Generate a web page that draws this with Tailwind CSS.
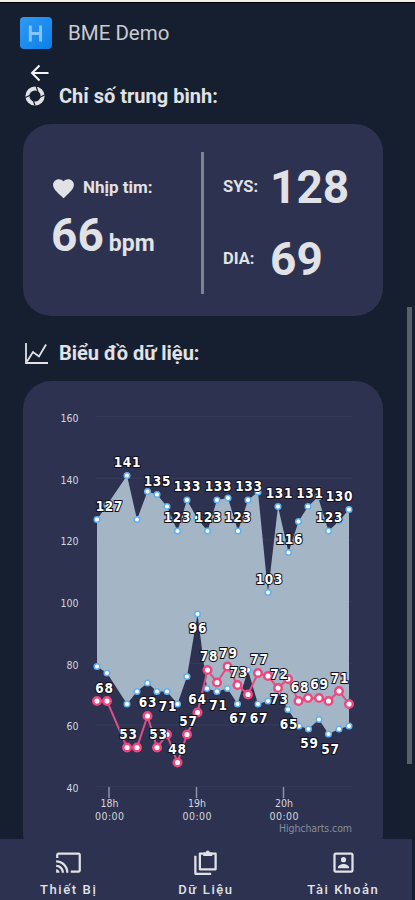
<!DOCTYPE html>
<html lang="vi">
<head>
    <meta charset="UTF-8">
    <meta name="viewport" content="width=device-width, initial-scale=1.0">
    <title>BME Demo</title>
    <script src="https://cdn.jsdelivr.net/npm/@tailwindcss/browser@4"></script>
</head>
<body class="bg-[#161f30] text-[#e1e2e6] font-['Roboto',sans-serif]">
    <div class="relative flex flex-col h-[900px] overflow-hidden border-t-2 border-[#f0f0f0]">
        <main class="h-[837px] overflow-hidden border-t border-black">
            <header class="flex items-center gap-4 pl-5 pt-[13px] h-[46px]">
                <div class="flex items-center justify-center w-8 h-8 rounded bg-linear-to-br from-[#2e9af5] to-[#087fe8]">
                    <svg width="32" height="32" viewBox="0 0 32 32" fill="none" stroke="#83c6fa" stroke-width="3"><path d="M10.3 8.5v16M20.5 8.5v16M10.3 16.5h10.2" /></svg>
                </div>
                <h1 class="text-[20.5px] leading-8 text-[#c9cbd0]">BME Demo</h1>
            </header>

            <div class="pl-[27px] pt-[12px] h-[33px]">
                <svg width="24" height="24" viewBox="0 0 24 24" fill="none" stroke="#f5f5f5" stroke-width="2"><path d="M21.5 12H5M12.5 4.5L5 12l7.5 7.5" /></svg>
            </div>

            <h2 class="flex items-center gap-[14px] pl-[25px] h-7 text-[20px] font-bold">
                <svg width="20" height="20" viewBox="0 0 20 20" fill="none" stroke="#e1e2e6">
                    <circle cx="10" cy="10" r="7.6" stroke-width="4" />
                    <path d="M11 0l2 6M19.5 9l-6 3M10 19.5l-2-6M.5 11.5l6-3" stroke="#161f30" stroke-width="1.2" />
                </svg>
                <span>Chỉ số trung bình:</span>
            </h2>

            <section class="flex mt-[14px] ml-[23px] w-[360px] h-[192px] rounded-[28px] bg-[#2c324f]">
                <div class="w-[178px] pl-7 pt-[53px]">
                    <div class="flex items-center gap-[7px] h-[22px]">
                        <svg width="25" height="25" viewBox="0 0 24 24" fill="#e1e2e6"><path d="M12 21.35l-1.45-1.32C5.4 15.36 2 12.28 2 8.5 2 5.42 4.42 3 7.5 3c1.74 0 3.41.81 4.5 2.09C13.09 3.81 14.76 3 16.5 3 19.58 3 22 5.42 22 8.5c0 3.78-3.4 6.86-8.55 11.54z" /></svg>
                        <span class="text-[17px] font-bold">Nhịp tim:</span>
                    </div>
                    <p class="flex items-baseline gap-[5px] mt-2 font-bold leading-[57px]">
                        <span class="text-[46px]">66</span>
                        <span class="text-[23px]">bpm</span>
                    </p>
                </div>
                <div class="w-[3px] h-[142px] mt-7 bg-[#7d8494]"></div>
                <div class="pl-[19px] pt-[34px] font-bold">
                    <div class="flex items-center h-[58px]">
                        <span class="w-[47px] text-[16.5px]">SYS:</span>
                        <span class="text-[46px]">128</span>
                    </div>
                    <div class="flex items-center h-[58px] mt-[14px]">
                        <span class="w-[47px] text-[16.5px]">DIA:</span>
                        <span class="text-[46px]">69</span>
                    </div>
                </div>
            </section>

            <h2 class="flex items-center gap-[11px] pl-6 mt-[23px] h-7 text-[20px] font-bold">
                <svg width="24" height="24" viewBox="0 0 24 24" fill="none" stroke="#e1e2e6" stroke-width="1.8"><path d="M2 2v20h22M3 20.5l6-9.5 6 4.5 7-12" /></svg>
                <span>Biểu đồ dữ liệu:</span>
            </h2>

            <section class="mt-[14px] ml-[23px] w-[360px] h-[480px] rounded-[28px] bg-[#2c324f]">
                <svg id="chart" class="font-['DejaVu_Sans_Condensed','DejaVu_Sans',sans-serif]" width="360" height="458" viewBox="23 381 360 458"></svg>
            </section>
        </main>

        <nav class="grid grid-cols-3 w-[412px] h-[61px] pt-[10px] bg-[#2c324f] text-[13px] font-medium tracking-[1.6px]">
            <a class="flex flex-col items-center gap-1">
                <svg width="27" height="27" viewBox="0 0 24 24" fill="#e1e2e6"><path d="M21 3H3c-1.1 0-2 .9-2 2v3h2V5h18v14h-7v2h7c1.1 0 2-.9 2-2V5c0-1.1-.9-2-2-2zM1 18v3h3c0-1.66-1.34-3-3-3zm0-4v2c2.76 0 5 2.24 5 5h2c0-3.87-3.13-7-7-7zm0-4v2c4.97 0 9 4.03 9 9h2c0-6.08-4.93-11-11-11z" /></svg>
                <span>Thiết Bị</span>
            </a>
            <a class="flex flex-col items-center gap-1">
                <svg width="27" height="27" viewBox="0 0 24 24" fill="none" stroke="#e1e2e6" stroke-width="2"><path d="M7 4h14v14H7zM3 6v16h14" stroke-linejoin="round" /><path d="M10 3h2.300a1.700 1.700 0 0 1 3.400 0H18v3.200h-8z" fill="#e1e2e6" stroke="none" /></svg>
                <span>Dữ Liệu</span>
            </a>
            <a class="flex flex-col items-center gap-1">
                <svg width="27" height="27" viewBox="0 0 24 24" fill="#e1e2e6"><path d="M19 3H5c-1.100 0-2 .9-2 2v14c0 1.100.9 2 2 2h14c1.100 0 2-.9 2-2V5c0-1.100-.9-2-2-2zm0 16H5V5h14z" /><circle cx="12" cy="9.500" r="2.300" /><path d="M7 16.500c0-2 3.200-3.200 5-3.200s5 1.200 5 3.200v.7H7z" /></svg>
                <span>Tài Khoản</span>
            </a>
        </nav>

        <!-- scroll thumb -->
        <div class="absolute right-[3px] top-[305px] w-[5px] h-[457px] bg-[#56616b]"></div>
    </div>

    <script>
        // [x, y] points of each series
        const high = [[97,519.5],[107,505],[127,475.5],[137,519.5],[147.5,491.5],[157,494.5],[167,506.5],[177.5,531],[187,500],[197,518],[207.5,531],[217,500],[228,498],[238,531],[248,500],[258,492],[268,592.5],[278,506.5],[288.5,552.5],[298.5,521.5],[308,506.5],[318,497],[328.5,531],[339,521],[349,509.5]];
        const low = [[97,666.5],[107,673],[127,704],[137,691.5],[147.5,683],[157,691.5],[167,691.5],[177.5,704],[187,676.5],[197.5,614],[207,688.5],[217,691.5],[227.5,688.5],[237.5,704],[248,670],[258,704],[268,701],[278,692],[288,709.5],[299,726],[308.5,729],[319,719.5],[328.5,734],[339,729],[349,726]];
        const pulse = [[97,701],[107,701],[127,747.5],[137,747.5],[147.5,716],[157,747.5],[167,734.5],[177.5,762.5],[187,734.5],[197.5,712.5],[207.5,670],[217,682.5],[227.5,666.5],[237.5,685],[248,694.5],[258,673],[268,676],[278,688],[288,679],[298.5,701],[308,698],[319,698],[328.5,701],[339,691],[349,704]];
        // [text, center x, center y]
        const labels = [[141,127,462],[127,109,506],[135,157,481],[133,187,486],[123,177,517],[133,218,486],[123,208,517],[133,248.5,486],[123,237.5,517],[131,279,493],[131,309.5,493],[130,339,496],[123,329,517],[116,289,539],[103,269,579],
            [96,197.5,628],[68,104,688],[63,147.5,702],[71,167.5,706],[53,128,734],[53,158,734],[48,177,749],[57,188,721],[64,197,699],[78,208.5,656],[79,228,653],[73,238.5,672],[77,259,659],[72,279,674],[73,279,699],[71,218,705],[67,238,718],[67,258.5,718],[65,288.5,724],[59,309,743],[57,330,749],[68,299.5,687],[69,319,684],[71,339.5,678]];

        const path = (pts) => pts.map((p) => p.join(',')).join(' ');
        const dots = (pts, r, stroke, width) => pts.map(([x, y]) => `<circle cx="${x}" cy="${y}" r="${r}" fill="#fff" stroke="${stroke}" stroke-width="${width}"/>`).join('');

        let svg = '';
        const grid = [160, 140, 120, 100, 80, 60, 40];
        grid.forEach((v, i) => {
            svg += `<text x="78.5" y="${421.8 + i * 61.7}" text-anchor="end" font-size="10.5" fill="#d5d7df">${v}</text>`;
            svg += `<line x1="96" x2="352" y1="${416.5 + i * 61.7}" y2="${416.5 + i * 61.7}" stroke="#363c5b"/>`;
        });
        svg += `<polygon points="${path(high)} ${path([...low].reverse())}" fill="#a4b5c6"/>`;
        svg += dots(high, 2.8, '#5fb0ee', 1.5) + dots(low, 2.8, '#5fb0ee', 1.5);
        svg += `<polyline points="${path(pulse)}" fill="none" stroke="#dc4f86" stroke-width="2"/>`;
        svg += dots(pulse, 3.8, '#f0467f', 2.5);
        labels.forEach(([t, x, y]) => {
            svg += `<text x="${x + 0.4}" y="${y + 4.8}" text-anchor="middle" font-size="13.5" font-weight="bold" letter-spacing="0.6" fill="#fff" stroke="#10101a" stroke-width="2" paint-order="stroke">${t}</text>`;
        });
        [['18h', 109], ['19h', 196.5], ['20h', 283.5]].forEach(([t, x]) => {
            svg += `<line x1="${x}" x2="${x}" y1="787" y2="798" stroke="#8e94a8" stroke-width="1.5"/>`;
            svg += `<text x="${x + 0.5}" y="807" text-anchor="middle" font-size="10.5" fill="#d5d7df">${t}</text>`;
            svg += `<text x="${x + 0.5}" y="819.5" text-anchor="middle" font-size="10.5" textLength="29" fill="#d5d7df">00:00</text>`;
        });
        svg += '<text x="279" y="831.5" textLength="73" font-size="10.5" fill="#898d9b">Highcharts.com</text>';
        document.getElementById('chart').innerHTML = svg;
    </script>
</body>
</html>
